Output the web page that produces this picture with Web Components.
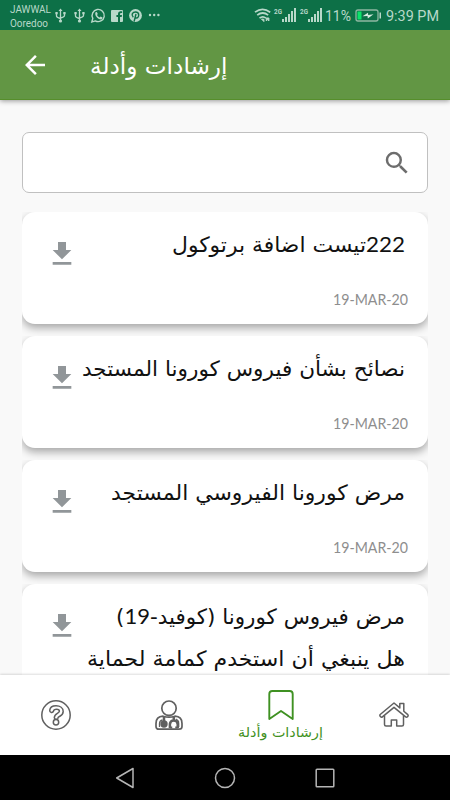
<!DOCTYPE html>
<html lang="ar">
<head>
<meta charset="utf-8">
<title>إرشادات وأدلة</title>
<style>
html,body{margin:0;width:450px;height:800px;overflow:hidden;background:#f9f9f9;font-family:"Lato","DejaVu Sans",sans-serif}
</style>
</head>
<body>
<guide-app></guide-app>
<script>
const define=(name,html)=>customElements.define(name,class extends HTMLElement{
  connectedCallback(){
    if(this.shadowRoot)return;
    const t=document.createElement('template');
    t.innerHTML=typeof html==='function'?html(this):html;
    this.attachShadow({mode:'open'}).append(t.content.cloneNode(true));
  }
});

// One line of text fitted to a fixed width; attribute "base" is the baseline offset.
define('fit-text',el=>{
  const a=n=>el.getAttribute(n),w=+a('w'),h=+a('h'),rtl=el.hasAttribute('rtl');
  const body=el.textContent.replace(/\d+/g,d=>rtl?`<tspan class="num">${d}</tspan>`:d);
  return `<style>
  :host{display:block;flex:none;width:${w}px;height:${h}px}
  svg{display:block;overflow:visible}
  text{fill:currentColor;font-family:${a('font')||'"DejaVu Sans"'},sans-serif;font-size:${a('size')}px;direction:${rtl?'rtl':'ltr'}}
  .num{font-family:Lato,sans-serif;font-size:${a('num')||a('size')}px}
  </style><svg width="${w}" height="${h}"><text x="${rtl?w:0}" y="${a('base')}" textLength="${w}" lengthAdjust="spacingAndGlyphs">${body}</text></svg>`;
});

define('status-bar',`<style>
:host{display:flex;height:30px;background:#0d7047;color:#b8d8c9;align-items:center;box-sizing:border-box;padding-left:10px;position:relative;z-index:2}
svg{display:block;flex:none}.c{width:41px;padding-top:2px}.r{margin-left:auto;display:flex;align-items:center;padding-right:11px}
</style>
<div class="c"><fit-text w="41" h="13" base="10" size="10.5" font="Roboto">JAWWAL</fit-text><fit-text w="38" h="13" base="11" size="10.5" font="Roboto">Ooredoo</fit-text></div>
<svg width="112" height="30" viewBox="51 0 112 30" fill="none" stroke="currentColor">
<g><path d="M60.5 10v11M56.5 13v3q0 1.5 4 2.500M64.500 13v2.500q0 1.500-4 2.500" stroke-width="1.300"/><path d="M58.500 11l2-2.500 2 2.500z" fill="currentColor" stroke="none"/><circle cx="60.500" cy="21" r="1.600" fill="currentColor" stroke="none"/><path d="M55.400 12h2.300v2.300h-2.300zM63.300 12h2.300v2.300h-2.300z" fill="currentColor" stroke="none"/></g>
<g transform="translate(19 0)"><path d="M60.500 10v11M56.500 13v3q0 1.500 4 2.500M64.500 13v2.500q0 1.500-4 2.500" stroke-width="1.300"/><path d="M58.500 11l2-2.500 2 2.500z" fill="currentColor" stroke="none"/><circle cx="60.500" cy="21" r="1.600" fill="currentColor" stroke="none"/><path d="M55.400 12h2.300v2.300h-2.300zM63.300 12h2.300v2.300h-2.300z" fill="currentColor" stroke="none"/></g>
<path d="M91.800 22l1-3.600a6.100 6.100 0 1 1 2.500 2.500z" stroke-width="1.400"/><path d="M95.500 12.300l1.300-.3 1 2-.8 1.100q.8 1.700 2.600 2.400l1-1 2 1.100q0 1.500-1.700 1.800c-3 0-6.700-3.700-5.400-7.100z" fill="currentColor" stroke="none"/>
<path fill="currentColor" stroke="none" fill-rule="evenodd" d="M112 10h10q1 0 1 1v10q0 1-1 1h-2v-5h1.700l.3-2H120v-1q0-1 1-1h1.200v-1.800h-1.900q-2.300 0-2.300 2.500V15h-1.600v2h1.600v5h-6q-1 0-1-1V11q0-1 1-1z"/>
<circle cx="135.500" cy="15.500" r="6.400" fill="currentColor" stroke="none"/><path d="M133.300 17.200c-2.700-2.700-.5-5.200 2.200-5.200 4.500 0 3.800 6 .8 6q-1 0-1.300-1M136 14l-1.900 7.500" stroke="#0d7047" stroke-width="1.400"/>
<g fill="currentColor" stroke="none"><circle cx="150" cy="15" r="1.200"/><circle cx="154.200" cy="15" r="1.200"/><circle cx="158.400" cy="15" r="1.200"/></g></svg>
<div class="r">
<svg width="18" height="30" viewBox="252 0 18 30" fill="none" stroke="currentColor" stroke-width="1.700"><path d="M253 12.200q7.500-5.800 15.200 0M255.200 15.200q5.500-4.400 11 0M257.500 18.200q3.300-2.600 6.500 0"/><path d="M259.500 19l2.400 2.600v-2.300zM264.300 18v3l1.300-1.500 1.300 1.500v-3z" stroke-width="1" fill="currentColor"/></svg>
<fit-text w="8" h="22" base="9.500" size="8" font="Roboto" style="margin-left:2px;font-weight:700">2G</fit-text>
<svg width="18" height="30" viewBox="0 0 18 30" fill="currentColor" style="margin-left:-2px"><path d="M2 19h2v3H2zM5 17h2v5H5zM8 14h2v8H8zM11 11h2v11h-2zM14 8h2v14h-2z"/></svg>
<fit-text w="8" h="22" base="9.500" size="8" font="Roboto" style="margin-left:2px;font-weight:700">2G</fit-text>
<svg width="16" height="30" viewBox="0 0 16 30" fill="currentColor" style="margin-left:-1px"><path d="M1 19h2v3H1zM4 17h2v5H4zM7 14h2v8H7zM10 11h2v11h-2zM13 8h2v14h-2z"/></svg>
<fit-text w="26" h="20" base="16" size="15.500" font="Roboto" style="margin-left:2px">11%</fit-text>
<svg width="27" height="30" viewBox="355 0 27 30" style="margin-left:4px"><rect x="356" y="10" width="22" height="11" rx="2" fill="none" stroke="#8fb7a3" stroke-width="1.300"/><path d="M357.500 11.500h4v8h-4z" fill="#0be36a"/><path d="M379.500 12.500h1.500v6h-1.500z" fill="#b8d8c9"/><path d="M362.500 16.300l5.500-3.500.2 2.200 5.300-.7-5.700 4.200-.3-2.600z" fill="#d5eadf"/></svg>
<fit-text w="53" h="20" base="16" size="15.500" font="Roboto" style="margin-left:4px">9:39 PM</fit-text>
</div>`);

define('app-header',`<style>
:host{display:flex;height:70px;background:#629644;color:#fff;align-items:center;box-sizing:border-box;padding-left:20px;border-bottom:1px solid #568e2b;box-shadow:0 1px 5px #0006;position:relative;z-index:1}
svg{display:block}slot{display:block}::slotted(*){margin-left:39.5px}
</style><svg width="30" height="30" viewBox="0 0 24 24" fill="currentColor"><path d="M20 11H7.830l5.590-5.590L12 4l-8 8 8 8 1.410-1.410L7.830 13H20v-2z"/></svg><slot></slot>`);

define('search-box',`<style>
:host{display:flex;height:61px;box-sizing:border-box;border:1px solid #c0c0c0;border-radius:7px;background:#fff;color:#6d6d6d;justify-content:flex-end;align-items:center;padding-right:15px}
</style><svg width="30" height="30" viewBox="0 0 24 24" fill="currentColor"><path d="M15.500 14h-.79l-.28-.27A6.471 6.471 0 0 0 16 9.500 6.500 6.500 0 1 0 9.500 16c1.610 0 3.090-.59 4.230-1.570l.27.28v.79l5 4.990L20.490 19l-4.990-5zm-6 0C7.010 14 5 11.990 5 9.500S7.010 5 9.500 5 14 7.010 14 9.500 11.990 14 9.500 14z"/></svg>`);

define('guide-card',el=>`<style>
:host{display:block;flex:none;height:124px;overflow:hidden}
:host([tall]){height:166px}
.card{height:112px;box-sizing:border-box;background:#fff;border-radius:13px;box-shadow:0 4px 8px #0005;display:flex;justify-content:space-between;padding:17px 23.5px 0 24px;color:#111}
:host([tall]) .card{height:154px}
.icon{display:block;margin-top:9px;color:#919699;flex:none}
.text{display:flex;flex-direction:column;align-items:flex-end;height:85px;width:0}
fit-text.date{margin:auto -3px 7.500px 0;color:#8e8e8e}
</style><div class="card"><svg class="icon" width="32" height="32" viewBox="0 0 24 24" fill="currentColor"><path d="M19 9h-4V3H9v6H5l7 7 7-7zM5 18v2h14v-2z"/></svg>
<div class="text"><slot></slot>${el.getAttribute('date')?`<fit-text class="date" w="75" h="15" base="13" size="15.200" font="Lato">${el.getAttribute('date')}</fit-text>`:''}</div></div>`);

define('tab-item',`<style>:host{display:flex;flex:1;flex-direction:column;align-items:center;justify-content:center;color:#606060}:host([active]){color:#3f9122;justify-content:flex-start;padding-top:14px}</style><slot></slot>`);

define('tab-bar',`<style>
:host{display:flex;height:80px;flex:none;background:#fff;box-shadow:0 -1px 2px #0002;position:relative}
svg{display:block}
</style>
<tab-item><svg width="32" height="32" viewBox="0 0 32 32" fill="none" stroke="currentColor" stroke-width="1.500"><circle cx="16" cy="16" r="14.200"/><path d="M9.700 11.300C10 8.500 12.500 6.800 16 6.800c4 0 7.200 2.200 7.200 5.700 0 3.200-2.200 4.200-4 5.200-1.200.7-1.200 1.100-1.400 1.700-.5 1.300-3.500 1.200-3.500-.6 0-2.600 1.500-3.600 3.100-4.500 1.400-.8 2-1.200 2-2 0-2.800-5.500-2.800-6 0-.5 1.900-3.900 1.600-3.700-1z"/><circle cx="16" cy="23.300" r="2.700"/></svg></tab-item>
<tab-item><svg width="30" height="32" viewBox="0 0 30 32" fill="none" stroke="currentColor" stroke-width="1.700"><circle cx="15" cy="9.200" r="7.200"/><path d="M2 27.500v-3q0-7 7-7.300 6 2 12 0 7 .3 7 7.300v3q0 2.700-3 2.700H5q-3 0-3-2.700z"/><path d="M5.500 28v-3.500q0-3 3-3.700M24.700 28v-3.500q0-3-2.500-4.500" stroke-width="1.300"/><path d="M10 17.500v6M19.800 17.500v4M15.900 29v-4q.4-3.600 3.900-3.600t3.900 3.600v4" stroke-width="2.500"/><circle cx="10" cy="25" r="3.700" fill="currentColor" stroke="none"/><path d="M17 27.500v2M22.500 27.500v2" stroke-width="2.500"/></svg></tab-item>
<tab-item active><svg width="26" height="32" viewBox="0 0 26 32" fill="none" stroke="currentColor" stroke-width="1.900"><path d="M1.300 30V5q0-3 3-3h17.400q3 0 3 3v25L13 22z" stroke-linejoin="round"/></svg><fit-text rtl w="85" h="18" base="16" size="13.500" style="margin-right:1.500px">إرشادات وأدلة</fit-text></tab-item>
<tab-item><svg width="30" height="26" viewBox="0 0 30 26" fill="none" stroke="currentColor" stroke-width="1.500" stroke-linejoin="round"><path d="M1.200 12.500L15 1l5.800 4.900V1.500h4V9.200l4 3.400q.8 1-.2 2t-2 .3L15 5.300 3.400 14.900q-1 .8-2-.3t-.2-2.100z"/><path d="M5.500 13.500v9q0 1.500 1.500 1.500h5.300v-6h5.400v6H23q1.500 0 1.500-1.500v-9"/></svg></tab-item>`);

define('system-nav',`<style>:host{display:flex;height:45px;flex:none;background:#000;justify-content:center;gap:80px;align-items:center}svg{display:block}</style>
<svg width="20" height="22" viewBox="0 0 20 22" fill="none" stroke="#b5b5b5" stroke-width="1.500" stroke-linejoin="round"><path d="M18 1.500v19L1.700 11z"/></svg>
<svg width="20" height="22" viewBox="0 0 20 22" fill="none" stroke="#b5b5b5" stroke-width="1.500" style="overflow:visible"><circle cx="10" cy="11" r="9.500"/></svg>
<svg width="20" height="22" viewBox="0 0 20 22" fill="none" stroke="#b5b5b5" stroke-width="1.500"><rect x="1.200" y="2.200" width="17.600" height="17.600" rx=".8"/></svg>`);

define('guide-app',`<style>
:host{display:flex;flex-direction:column;width:450px;height:800px;background:#f9f9f9}
main{flex:1;min-height:0;overflow:hidden;padding:32px 22px 0;display:flex;flex-direction:column}
.list{margin-top:19px;display:flex;flex-direction:column}
status-bar,app-header{flex:none}search-box{flex:none}
</style>
<status-bar></status-bar>
<app-header><fit-text rtl w="137.500" h="30" base="23.500" size="23">إرشادات وأدلة</fit-text></app-header>
<main><search-box></search-box>
<div class="list">
<guide-card date="19-MAR-20"><fit-text rtl w="233" h="30" base="23" size="21" num="21.500">222تيست اضافة برتوكول</fit-text></guide-card>
<guide-card date="19-MAR-20"><fit-text rtl w="323" h="30" base="23" size="21">نصائح بشأن فيروس كورونا المستجد</fit-text></guide-card>
<guide-card date="19-MAR-20"><fit-text rtl w="294" h="30" base="23" size="21">مرض كورونا الفيروسي المستجد</fit-text></guide-card>
<guide-card tall><fit-text rtl w="289" h="42" base="23" size="21" num="21.500">مرض فيروس كورونا (كوفيد-19)</fit-text><fit-text rtl w="318" h="42" base="23" size="21">هل ينبغي أن استخدم كمامة لحماية</fit-text></guide-card>
</div></main>
<tab-bar></tab-bar><system-nav></system-nav>`);
</script>
</body>
</html>
